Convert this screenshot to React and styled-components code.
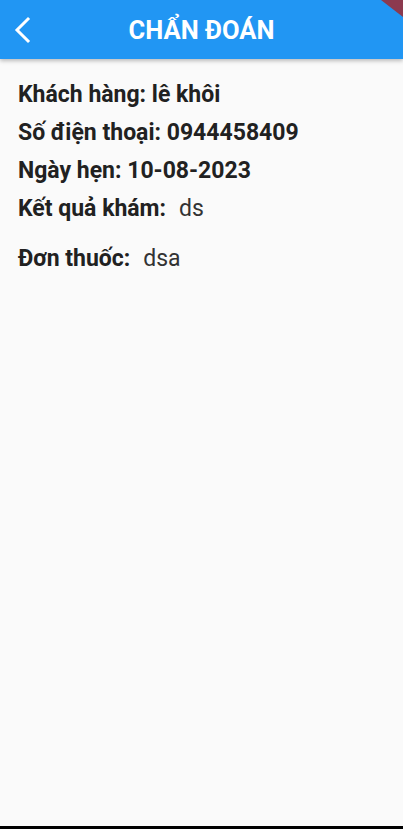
import React from "react";
import styled, { createGlobalStyle } from "styled-components";

const Global = createGlobalStyle`
  html, body { margin: 0; padding: 0; background: #fafafa; }
  body { font-family: Roboto, "Noto Sans", sans-serif; }
  * { box-sizing: border-box; }
`;

const Screen = styled.div`
  position: relative;
  width: 403px;
  height: 829px;
  background: #fafafa;
  display: flex;
  flex-direction: column;
  overflow: hidden;
  border-bottom: 3px solid #000;
`;

const AppBar = styled.header`
  height: 59px;
  background: #2196f3;
  display: flex;
  align-items: center;
  position: relative;
  box-shadow: 0 2px 4px rgba(0, 0, 0, 0.25);
  z-index: 1;
`;

const BackButton = styled.button`
  width: 44px;
  height: 44px;
  margin-left: 1px;
  border: none;
  background: transparent;
  display: flex;
  align-items: center;
  justify-content: center;
  padding: 0;
  color: #fff;
`;

const Title = styled.h1`
  position: absolute;
  left: 0;
  right: 0;
  margin: 0;
  text-align: center;
  color: #fff;
  font-family: Roboto, sans-serif;
  font-weight: 700;
  font-size: 25.5px;
  pointer-events: none;
`;

const DebugCorner = styled.div`
  position: absolute;
  top: 0;
  right: 0;
  width: 22px;
  height: 17px;
  background: #8c3a4f;
  clip-path: polygon(0 0, 100% 0, 100% 100%);
  z-index: 2;
`;

const Body = styled.main`
  flex: 1;
  padding: 22px 18px 0;
  display: flex;
  flex-direction: column;
`;

const Row = styled.div`
  display: flex;
  align-items: baseline;
  height: ${(p) => p.$h}px;
  font-family: Roboto, sans-serif;
  font-size: 23px;
  line-height: 27px;
  color: #212121;
`;

const Label = styled.span`
  font-weight: 700;
`;

const Value = styled.span`
  font-weight: 400;
  color: #333;
  margin-left: 13px;
`;

export default function App() {
  return (
    <>
      <Global />
      <Screen>
        <AppBar>
          <BackButton aria-label="back">
            <svg width="24" height="28" viewBox="0 0 24 28" fill="none">
              <path d="M17 3 L6 14 L17 25" stroke="#fff" strokeWidth="3" strokeLinecap="square" />
            </svg>
          </BackButton>
          <Title>CHẨN ĐOÁN</Title>
          <DebugCorner />
        </AppBar>
        <Body>
          <Row $h={38}><Label>Khách hàng: lê khôi</Label></Row>
          <Row $h={38}><Label>Số điện thoại: 0944458409</Label></Row>
          <Row $h={38}><Label>Ngày hẹn: 10-08-2023</Label></Row>
          <Row $h={50}><Label>Kết quả khám:</Label><Value>ds</Value></Row>
          <Row $h={38}><Label>Đơn thuốc:</Label><Value>dsa</Value></Row>
        </Body>
      </Screen>
    </>
  );
}
